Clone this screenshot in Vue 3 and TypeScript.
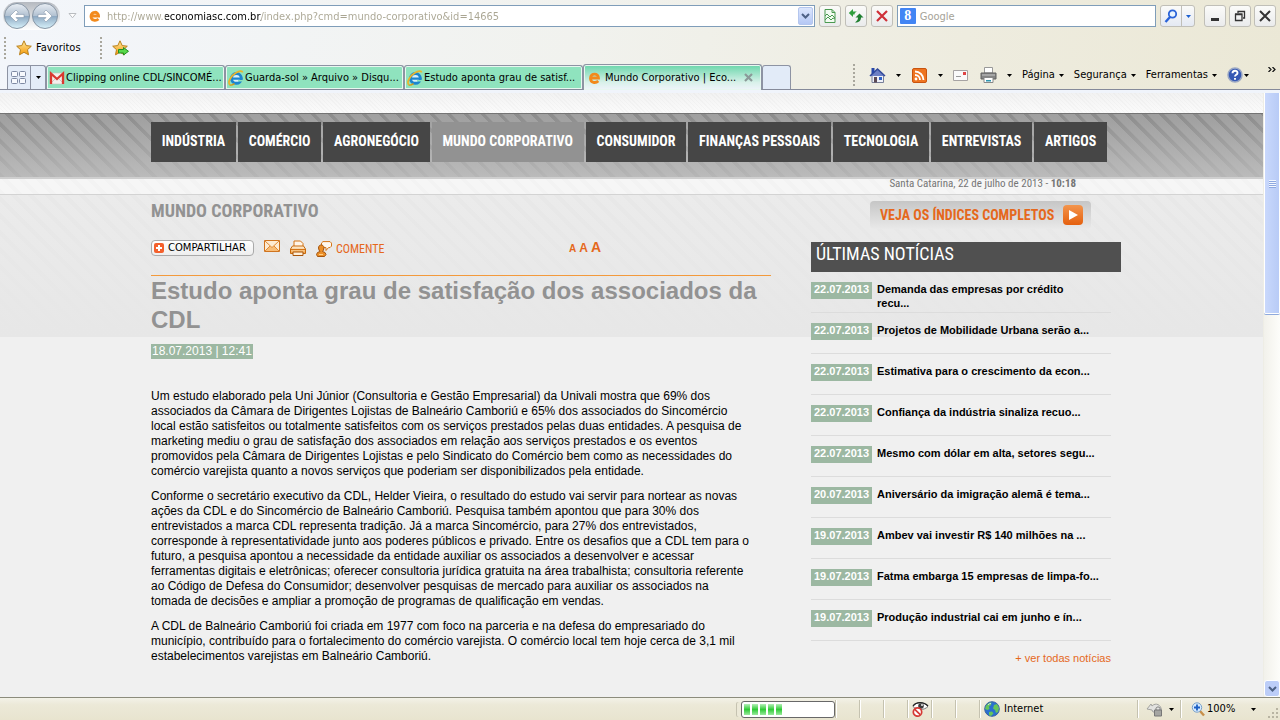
<script setup lang="ts">
interface Tab { title: string; icon: 'mail' | 'ie' }
interface News { date: string; title: string }

const tabs: Tab[] = [
  { title: 'Clipping online CDL/SINCOMÉ...', icon: 'mail' },
  { title: 'Guarda-sol » Arquivo » Disqu...', icon: 'ie' },
  { title: 'Estudo aponta grau de satisf...', icon: 'ie' },
]
const menus = ['Página', 'Segurança', 'Ferramentas']
const sections = ['INDÚSTRIA', 'COMÉRCIO', 'AGRONEGÓCIO', 'MUNDO CORPORATIVO', 'CONSUMIDOR', 'FINANÇAS PESSOAIS', 'TECNOLOGIA', 'ENTREVISTAS', 'ARTIGOS']
const paragraphs: string[][] = [
  [
    'Um estudo elaborado pela Uni Júnior (Consultoria e Gestão Empresarial) da Univali mostra que 69% dos',
    'associados da Câmara de Dirigentes Lojistas de Balneário Camboriú e 65% dos associados do Sincomércio',
    'local estão satisfeitos ou totalmente satisfeitos com os serviços prestados pelas duas entidades. A pesquisa de',
    'marketing mediu o grau de satisfação dos associados em relação aos serviços prestados e os eventos',
    'promovidos pela Câmara de Dirigentes Lojistas e pelo Sindicato do Comércio bem como as necessidades do',
    'comércio varejista quanto a novos serviços que poderiam ser disponibilizados pela entidade.',
  ],
  [
    'Conforme o secretário executivo da CDL, Helder Vieira, o resultado do estudo vai servir para nortear as novas',
    'ações da CDL e do Sincomércio de Balneário Camboriú. Pesquisa também apontou que para 30% dos',
    'entrevistados a marca CDL representa tradição. Já a marca Sincomércio, para 27% dos entrevistados,',
    'corresponde à representatividade junto aos poderes públicos e privado. Entre os desafios que a CDL tem para o',
    'futuro, a pesquisa apontou a necessidade da entidade auxiliar os associados a desenvolver e acessar',
    'ferramentas digitais e eletrônicas; oferecer consultoria jurídica gratuita na área trabalhista; consultoria referente',
    'ao Código de Defesa do Consumidor; desenvolver pesquisas de mercado para auxiliar os associados na',
    'tomada de decisões e ampliar a promoção de programas de qualificação em vendas.',
  ],
  [
    'A CDL de Balneário Camboriú foi criada em 1977 com foco na parceria e na defesa do empresariado do',
    'município, contribuído para o fortalecimento do comércio varejista. O comércio local tem hoje cerca de 3,1 mil',
    'estabelecimentos varejistas em Balneário Camboriú.',
  ],
]
const news: News[] = [
  { date: '22.07.2013', title: 'Demanda das empresas por crédito\nrecu...' },
  { date: '22.07.2013', title: 'Projetos de Mobilidade Urbana serão a...' },
  { date: '22.07.2013', title: 'Estimativa para o crescimento da econ...' },
  { date: '22.07.2013', title: 'Confiança da indústria sinaliza recuo...' },
  { date: '22.07.2013', title: 'Mesmo com dólar em alta, setores segu...' },
  { date: '20.07.2013', title: 'Aniversário da imigração alemã é tema...' },
  { date: '19.07.2013', title: 'Ambev vai investir R$ 140 milhões na ...' },
  { date: '19.07.2013', title: 'Fatma embarga 15 empresas de limpa-fo...' },
  { date: '19.07.2013', title: 'Produção industrial cai em junho e ín...' },
]
</script>

<template>
  <div class="browser">
    <svg class="defs" aria-hidden="true">
      <defs>
        <linearGradient id="orb" x1="0" y1="0" x2="0" y2="1">
          <stop offset="0" stop-color="#e9eef4" /><stop offset=".48" stop-color="#b3c2d2" />
          <stop offset=".52" stop-color="#8ea9c2" /><stop offset="1" stop-color="#d8f2fb" />
        </linearGradient>
        <linearGradient id="gold" x1="0" y1="0" x2="0" y2="1">
          <stop offset="0" stop-color="#ffe9a0" /><stop offset="1" stop-color="#f59a08" />
        </linearGradient>
        <linearGradient id="amber" x1="0" y1="0" x2="0" y2="1">
          <stop offset="0" stop-color="#fdf3e2" /><stop offset="1" stop-color="#f2a03c" />
        </linearGradient>
        <symbol id="ie" viewBox="0 0 16 16">
          <circle cx="8.4" cy="8.4" r="4.9" fill="#d9f1fb" stroke="#1d86cf" stroke-width="2.9" />
          <path d="M4 8.6h10.4" stroke="#1d86cf" stroke-width="2.2" />
          <path d="M10 9.9h5.5v1.5H10z" fill="#8de3bd" />
          <path d="M1.8 14.8C-.8 12 3.300 5.500 8 2.800c3.300-2 6.400-2.300 6.600-.3" fill="none" stroke="#eab52c" stroke-width="1.7" />
          <path d="M1.800 14.800c1.300.8 3.200-.2 4.700-1.200" fill="none" stroke="#d99b18" stroke-width="1.400" />
        </symbol>
        <symbol id="caret" viewBox="0 0 5 3"><path d="M0 0h5L2.500 3z" fill="currentColor" /></symbol>
        <symbol id="chevron" viewBox="0 0 9 6"><path d="M1 1l3.500 3.500L8 1" fill="none" stroke="#4d6185" stroke-width="2" /></symbol>
        <symbol id="star" viewBox="0 0 16 16">
          <path d="M8 .8l2.200 4.800 5.100.6-3.800 3.500 1 5.100L8 12.300l-4.500 2.500 1-5.100L.7 6.200l5.100-.6z" fill="url(#gold)" stroke="#b8801c" />
        </symbol>
      </defs>
    </svg>

    <header class="chrome">
      <div class="address-row">
        <div class="history">
          <button class="plain" aria-label="Voltar">
            <svg width="28" height="28" viewBox="0 0 28 28"><circle cx="14" cy="14" r="12.500" fill="url(#orb)" stroke="#8896a5" /><path d="M7 14l6-6 2.200 2.200-2.200 2.200h8v3.200h-8l2.200 2.200L13 20z" fill="#fff" stroke="#8496aa" stroke-width=".6" /></svg>
          </button>
          <button class="plain" aria-label="Avançar">
            <svg width="28" height="28" viewBox="0 0 28 28"><circle cx="14" cy="14" r="12.500" fill="url(#orb)" stroke="#8896a5" /><path d="M21 14l-6-6-2.200 2.200 2.200 2.200H7v3.200h8l-2.200 2.200L15 20z" fill="#fff" stroke="#8496aa" stroke-width=".6" /></svg>
          </button>
        </div>
        <button class="plain recent" aria-label="Páginas recentes"><svg width="9" height="6" viewBox="0 0 9 6"><path d="M1 .5h7L4.500 4.800z" fill="#fff" stroke="#b9bcc0" /></svg></button>
        <div class="field address">
          <svg width="16" height="16" viewBox="0 0 16 16"><path d="M4 8h7.600c0-5-7.600-5-7.600.2 0 4.800 5 5 7.500 2.800" fill="none" stroke="#f28a1c" stroke-width="2.800" /></svg>
          <input class="url" aria-label="Endereço" value="http://www.economiasc.com.br/index.php?cmd=mundo-corporativo&amp;id=14665">
          <button class="drop" aria-label="Lista de endereços"><svg width="9" height="6"><use href="#chevron" /></svg></button>
        </div>
        <div class="tools">
          <button class="tool" aria-label="Modo de compatibilidade"><svg width="16" height="16" viewBox="0 0 16 16"><path d="M3 1.500h7l3 3v10H3zM10 1.500v3h3M3 8l2-2 3 3 2-2 3 3M3 12l3-3 3 3 2-2 2 1" fill="#f3fbf2" stroke="#4a9a50" /></svg></button>
          <button class="tool" aria-label="Atualizar"><svg width="16" height="16" viewBox="0 0 16 16"><path d="M5 1L.8 5 5 9V6.500h1.500c0-1.500 1-2.500 2.500-3H5z" fill="#2f9e3c" /><path d="M11.500 5.500L7.500 9.500H10c0 2-1 3.500-3 5 4 0 6-2 6-5h2.500z" fill="#1f7f30" /></svg></button>
          <button class="tool" aria-label="Parar"><svg width="16" height="16" viewBox="0 0 16 16"><path d="M3 3l10 10M13 3L3 13" stroke="#cf3038" stroke-width="2.200" /></svg></button>
        </div>
        <div class="field search">
          <span class="google">8</span>
          <input aria-label="Pesquisar" placeholder="Google">
        </div>
        <div class="search-go">
          <button aria-label="Pesquisar"><svg width="14" height="14" viewBox="0 0 14 14"><circle cx="8.500" cy="5" r="3.700" fill="#e9f4ff" stroke="#2a63d8" stroke-width="1.800" /><path d="M6 8l-4.500 5" stroke="#2a63d8" stroke-width="2.400" /></svg></button>
          <button class="go-more" aria-label="Provedores"><svg width="5" height="3"><use href="#caret" /></svg></button>
        </div>
        <div class="window-controls">
          <button class="tool" aria-label="Minimizar"><svg width="12" height="12" viewBox="0 0 12 12"><path d="M2 8h8v3H2z" fill="#333" /></svg></button>
          <button class="tool" aria-label="Restaurar"><svg width="12" height="12" viewBox="0 0 12 12"><path d="M4 3V1.500h6.500V8H9M1.500 4.500H8v6H1.500zM1 4h7.500M4 1.500h7" fill="none" stroke="#333" stroke-width="1.300" /></svg></button>
          <button class="tool" aria-label="Fechar"><svg width="12" height="12" viewBox="0 0 12 12"><path d="M1 1l10 10M11 1L1 11" stroke="#333" stroke-width="2" /></svg></button>
        </div>
      </div>

      <div class="favorites-row">
        <span class="grip"></span>
        <button class="plain favorites"><svg width="16" height="16"><use href="#star" /></svg>Favoritos</button>
        <span class="grip"></span>
        <button class="plain add-fav" aria-label="Adicionar à barra de favoritos"><svg width="17" height="16" viewBox="0 0 17 16"><use href="#star" width="16" height="16" /><path d="M6.500 9.500h5v-2l5 3.800-5 3.700v-2h-5z" fill="#57d84a" stroke="#238f22" /></svg></button>
      </div>

      <div class="tab-row">
        <div class="tabs">
          <button class="quick" aria-label="Guias rápidas"><svg width="16" height="14" viewBox="0 0 16 14"><g fill="#f7f9fd" stroke="#7f8aa3"><rect x=".5" y=".5" width="6" height="5" rx="1" /><rect x="8.500" y=".5" width="6" height="5" rx="1" /><rect x=".5" y="7.500" width="6" height="5" rx="1" /><rect x="8.500" y="7.500" width="6" height="5" rx="1" /></g></svg></button>
          <button class="quick quick-more" aria-label="Lista de guias"><svg width="5" height="3"><use href="#caret" /></svg></button>
          <button v-for="tab in tabs" :key="tab.title" class="tab">
            <svg v-if="tab.icon === 'mail'" width="16" height="16" viewBox="0 0 16 16"><path d="M1 3h14v11H1z" fill="#f4efec" stroke="#c9c0ba" stroke-width=".6" /><path d="M1 14l5-5M15 14l-5-5" stroke="#cfc6c2" /><path d="M2 14V3.500l6 5.500 6-5.500V14" fill="none" stroke="#d9392f" stroke-width="2.300" /></svg>
            <svg v-else width="16" height="16"><use href="#ie" /></svg>
            <span>{{ tab.title }}</span>
          </button>
          <button class="tab current">
            <svg width="16" height="16" viewBox="0 0 16 16"><path d="M3 8h8.500c0-5.300-8-5.300-8 .2 0 5 5.200 5.200 7.800 2.800" fill="none" stroke="#f28a1c" stroke-width="2.800" /></svg>
            <span class="current-title">Mundo Corporativo | Eco...</span>
            <svg class="close" width="9" height="9" viewBox="0 0 9 9"><path d="M1 1l7 7M8 1L1 8" stroke="#8b9a99" stroke-width="2.200" /></svg>
          </button>
          <button class="new-tab" aria-label="Nova guia"></button>
        </div>
        <div class="commands">
          <span class="grip"></span>
          <button class="plain cmd" aria-label="Página inicial"><svg width="17" height="17" viewBox="0 0 17 17"><path d="M3 8h11.500v7.500H3z" fill="#eef0f8" stroke="#777f99" /><path d="M1 9l7.500-7 7.500 7" fill="#6c7fc4" stroke="#334a9a" stroke-width="1.600" /><path d="M2.500 1h3v4l-3 2z" fill="#2747a8" /><path d="M5 10h3v5.500H5z" fill="#5c4a55" /><path d="M10 10h3v3h-3z" fill="#2e62c8" /></svg></button>
          <button class="plain more" aria-label="Opções de página inicial"><svg width="5" height="3"><use href="#caret" /></svg></button>
          <button class="plain cmd" aria-label="Feeds"><svg width="15" height="15" viewBox="0 0 15 15"><rect x=".5" y=".5" width="14" height="14" rx="1.500" fill="#ee7420" stroke="#c9540f" /><path d="M3 7a5 5 0 015 5M3 3.500a8.500 8.500 0 018.500 8.500" fill="none" stroke="#fff" stroke-width="1.800" /><circle cx="4" cy="11" r="1.400" fill="#fff" /></svg></button>
          <button class="plain more" aria-label="Opções de feeds"><svg width="5" height="3"><use href="#caret" /></svg></button>
          <button class="plain mail" aria-label="Ler email"><svg width="15" height="11" viewBox="0 0 15 11"><path d="M.5 .5h14v10H.5z" fill="#fafafa" stroke="#a6a3a3" /><path d="M10 2h3v3h-3z" fill="#df4545" /><path d="M3 6.500h5" stroke="#999" /></svg></button>
          <button class="plain cmd" aria-label="Imprimir"><svg width="17" height="16" viewBox="0 0 17 16"><path d="M4.500.5h8V6h-8z" fill="#fff" stroke="#999" /><path d="M1 6h15v6H1z" fill="#858585" stroke="#606060" /><path d="M2 8h13" stroke="#c7c7c7" /><path d="M4 10.500h9v5H4z" fill="#fff" stroke="#888" /><path d="M6 13h5v1.500H6z" fill="#2d95ae" /></svg></button>
          <button class="plain more" aria-label="Opções de impressão"><svg width="5" height="3"><use href="#caret" /></svg></button>
          <button v-for="menu in menus" :key="menu" class="plain menu">{{ menu }}<svg width="5" height="3"><use href="#caret" /></svg></button>
          <button class="plain help" aria-label="Ajuda"><svg width="16" height="16" viewBox="0 0 16 16"><circle cx="8" cy="8" r="7" fill="#3659b4" stroke="#9aa7c4" stroke-width="1.500" /><path d="M5.500 6.200c0-3.300 5-3.200 5-.3 0 1.900-2.500 1.900-2.500 3.600M8 11v1.800" fill="none" stroke="#fff" stroke-width="1.900" /></svg><svg width="5" height="3"><use href="#caret" /></svg></button>
          <button class="plain overflow" aria-label="Mais comandos"><svg width="8" height="5" viewBox="0 0 8 5"><path d="M.5 0L3 2.500.5 5M4.500 0L7 2.500 4.500 5" fill="none" stroke="#111" stroke-width="1.200" /></svg></button>
        </div>
      </div>
    </header>

    <div class="viewport">
      <main class="page">
        <div class="texture"></div>
        <nav class="band">
          <div class="wrap sections">
            <a v-for="s in sections" :key="s" href="#" :class="{ active: s === 'MUNDO CORPORATIVO' }">{{ s }}</a>
          </div>
        </nav>
        <div class="strip"><div class="wrap today">Santa Catarina, 22 de julho de 2013 - <b>10:18</b></div></div>
        <div class="content">
          <div class="wrap columns">
            <article>
              <h2>MUNDO CORPORATIVO</h2>
              <div class="actions">
                <button class="share"><svg width="10" height="10" viewBox="0 0 10 10"><rect width="10" height="10" rx="2" fill="#f4602c" /><path d="M5 2v6M2 5h6" stroke="#fff" stroke-width="2" /></svg>COMPARTILHAR</button>
                <a href="#" class="send" aria-label="Enviar"><svg width="16" height="12" viewBox="0 0 16 12"><path d="M.5.5h15v11H.5z" fill="#fdebd3" stroke="#cf7420" /><path d="M1 11l5-5 2 1.500L10 6l5 5z" fill="#f8bd78" /><path d="M1 1l7 6.500L15 1M1 11l5-5M15 11l-5-5" fill="none" stroke="#e08a34" /></svg></a>
                <a href="#" aria-label="Imprimir"><svg width="16" height="16" viewBox="0 0 16 16"><path d="M4 7V1h6.500L13 3.500V7" fill="#fff5e8" stroke="#d47416" /><path d="M2.500 6h11l2 3v4.500H.5V9z" fill="url(#amber)" stroke="#c8690b" /><path d="M1 9.500h14" stroke="#d47416" /><path d="M3 12h10v3.500H3z" fill="#fff0d9" stroke="#a9550b" /></svg></a>
                <a href="#" class="comment"><svg width="16" height="16" viewBox="0 0 16 16"><path d="M7 .6h7l1.500 1.500v3L14 6.600h-1.500L10 9.500V6.600H7L5.500 5V2z" fill="#fff8ee" stroke="#d47416" /><path d="M2.500 7c0-4 5-4 5.500-.5L7.500 9l-1 1.500 2.500 1 1 2-1.500 2H1.500l-1-2 1-2 2.500-1L3 9z" fill="#ec8f28" stroke="#a3540f" /><path d="M3 13.500h4" stroke="#ffd089" /></svg>COMENTE</a>
                <span class="sizes"><a href="#" class="s">A</a><a href="#" class="m">A</a><a href="#" class="l">A</a></span>
              </div>
              <h1>Estudo aponta grau de satisfação dos associados da CDL</h1>
              <time>18.07.2013 | 12:41</time>
              <div class="body">
                <p v-for="(p, i) in paragraphs" :key="i"><template v-for="(line, j) in p" :key="j">{{ line }}<br v-if="j < p.length - 1"></template></p>
              </div>
            </article>
            <aside>
              <a href="#" class="indices">VEJA OS ÍNDICES COMPLETOS<svg width="20" height="20" viewBox="0 0 20 20"><defs><linearGradient id="play" x1="0" y1="0" x2="0" y2="1"><stop offset="0" stop-color="#f3954d" /><stop offset="1" stop-color="#e5600e" /></linearGradient></defs><rect width="20" height="20" rx="4" fill="url(#play)" /><path d="M6 5l9 5-9 5z" fill="#fff" /></svg></a>
              <h3>ÚLTIMAS NOTÍCIAS</h3>
              <ul>
                <li v-for="n in news" :key="n.title"><span class="stamp">{{ n.date }}</span><a href="#">{{ n.title }}</a></li>
              </ul>
              <a href="#" class="all">+ ver todas notícias</a>
            </aside>
          </div>
        </div>
      </main>
      <div class="scrollbar">
        <div class="thumb"><i></i></div>
        <button class="down" aria-label="Rolar para baixo"><svg width="9" height="6"><use href="#chevron" /></svg></button>
      </div>
    </div>

    <footer class="status">
      <div class="progress"><span v-for="n in 5" :key="n"></span></div>
      <span class="cell"></span><span class="cell"></span><span class="cell"></span>
      <span class="cell"><svg width="17" height="16" viewBox="0 0 17 16"><path d="M1 5.500C4 .5 12 .5 16 5.500c-4 4-11 4-15 0z" fill="#fff" stroke="#777" /><path d="M1 5C4 .5 12 .5 16 5" fill="none" stroke="#222" stroke-width="1.300" /><circle cx="9" cy="5" r="2.800" fill="#3c3c3c" /><circle cx="10" cy="4" r=".9" fill="#fff" /><circle cx="5.500" cy="11" r="4.200" fill="#fff" stroke="#d53a35" stroke-width="1.700" /><path d="M2.800 8.300l5.400 5.400" stroke="#d53a35" stroke-width="1.700" /></svg></span>
      <span class="cell"></span><span class="cell"></span>
      <span class="cell zone"><svg width="16" height="16" viewBox="0 0 16 16"><circle cx="8" cy="8" r="7.300" fill="#2a70cf" stroke="#3b62a0" /><path d="M2 5c1-2 4-4 5.500-3.500L7 4 5 5.500 5.500 8l-2 1L1 8zM10 4l3-1 2 4-1 4-2 1-1-3-2-1.500zM5 11l3-.5 1.500 2L7 15l-2-1z" fill="#66c65a" /><path d="M4 4c1-1 2-1.500 3-1.500" stroke="#dff2ff" /></svg>Internet</span>
      <span class="cell protect"><svg width="18" height="16" viewBox="0 0 18 16"><path d="M1 8L5 3l1 2c4-4 9-1 9.500 4L14 11H7L6 9z" fill="#e2e2e0" stroke="#a3a3a0" /><path d="M8.500 9h7v6h-7z" fill="#a5a5a2" stroke="#777" /><path d="M10 9V7.500c0-2 4-2 4 0V9" fill="none" stroke="#777" /></svg><svg width="5" height="3"><use href="#caret" /></svg></span>
      <button class="cell zoom"><svg width="14" height="15" viewBox="0 0 14 15"><path d="M9 9l4 4.500" stroke="#c78f4a" stroke-width="2.400" /><circle cx="6" cy="5.500" r="4.700" fill="#d6ebff" stroke="#79a0c8" /><path d="M6 2.500v6M3 5.500h6" stroke="#1c5fc4" stroke-width="1.800" /></svg>100%<svg class="zoom-caret" width="5" height="3"><use href="#caret" /></svg></button>
      <svg class="resize" width="12" height="12" viewBox="0 0 12 12"><path d="M8 0h2v2H8zM4 4h2v2H4zM8 4h2v2H8zM0 8h2v2H0zM4 8h2v2H4zM8 8h2v2H8z" fill="#b8b4a2" /></svg>
    </footer>
  </div>
</template>

<style>
body { margin: 0; overflow: hidden; }
</style>

<style scoped>
* { box-sizing: border-box; }
.browser { height: 100vh; display: flex; flex-direction: column; background: #f0f0f0; color: #000; font: 11px/14px "DejaVu Sans Condensed", "DejaVu Sans", sans-serif; }
.defs { position: absolute; width: 0; height: 0; }
svg { display: block; flex: none; }
button, input { font: inherit; color: inherit; margin: 0; padding: 0; }
a { text-decoration: none; color: inherit; }
.plain { border: 0; background: none; display: flex; align-items: center; white-space: nowrap; }

.chrome { flex: none; background: linear-gradient(100deg, #f3f6fb 0%, #f1f2ee 45%, #eeecdf 75%, #ebe8d6 100%); }
.address-row { display: flex; align-items: center; height: 32px; padding-right: 4px; }
.history { display: flex; width: 57px; height: 28px; margin-left: 3px; border-radius: 14px; background: linear-gradient(#b5b9c0, #fff); }
.recent { width: 24px; justify-content: center; height: 20px; }
.field { display: flex; align-items: center; height: 22px; background: #fff; border: 1px solid #7f9db9; }
.field input { flex: 1; min-width: 0; border: 0; outline: 0; background-color: transparent; height: 18px; }
.address { flex: 731; min-width: 0; padding: 1px 1px 1px 2px; gap: 4px; }
.address .url { color: transparent; background-image: linear-gradient(90deg, #a9a592 58px, #000 58px, #000 154px, #a9a592 154px); -webkit-background-clip: text; background-clip: text; }
.drop { width: 15px; height: 18px; border: 1px solid #b4c6ee; border-radius: 2px; background: linear-gradient(#dce6fd, #b5c8f5); display: grid; place-items: center; }
.tools { display: flex; gap: 4px; margin: 0 4px; }
.tool { width: 22px; height: 22px; display: grid; place-items: center; border: 1px solid #c0bfb8; border-radius: 3px; background: linear-gradient(#fbfbf9, #eaebec); }
.search { flex: 255; min-width: 0; padding: 1px 2px; gap: 4px; }
.google { width: 16px; height: 16px; border-radius: 1px; background: #4285f4; color: #fff; font: bold 14px/16px "Liberation Serif", serif; text-align: center; }
.search input::placeholder { color: #a5a297; opacity: 1; }
.search-go { display: flex; margin-left: 4px; height: 22px; border: 1px solid #c0bfb8; border-radius: 3px; background: linear-gradient(#fbfbf9, #e4e9f3); }
.search-go button { border: 0; background: none; width: 20px; display: grid; place-items: center; }
.search-go .go-more { width: 13px; border-left: 1px solid #c0bfb8; color: #1a5fd0; }
.window-controls { display: flex; gap: 3px; margin-left: 9px; }

.grip { width: 2px; height: 22px; background: repeating-linear-gradient(#a9a79d 0 2px, transparent 2px 4px); }
.favorites-row { display: flex; align-items: center; height: 31px; padding-left: 4px; }
.favorites { gap: 4px; margin: 0 19px 0 10px; }
.add-fav { margin-left: 10px; }

.tab-row { display: flex; align-items: flex-end; justify-content: space-between; height: 27px; border-bottom: 1px solid #858a9a; }
.tabs { display: flex; align-items: flex-end; padding-left: 7px; }
.quick { width: 24px; height: 24px; display: grid; place-items: center; border: 1px solid #8d93a3; border-bottom: 0; border-radius: 3px 0 0 0; background: #e4ecf8; }
.quick-more { width: 15px; border-left: 0; border-radius: 0 3px 0 0; }
.tab { display: flex; align-items: center; gap: 1px; width: 179px; height: 24px; padding: 0 2px; border: 1px solid #8d93a3; border-bottom: 0; border-radius: 3px 3px 0 0; background: #8fe3be; box-shadow: inset 0 0 0 1px #e8f7f0; white-space: nowrap; overflow: hidden; }
.current { gap: 2px; padding-left: 3px; height: 26px; margin-bottom: -1px; background: linear-gradient(#69d6aa, #d9f1ea 70%, #f0f4fb); }
.current-title { flex: 1; text-align: left; }
.close { margin-right: 6px; }
.new-tab { width: 29px; height: 24px; border: 1px solid #8d93a3; border-bottom: 0; border-radius: 3px 3px 0 0; background: #e2ebf8; }
.commands { display: flex; align-items: center; height: 28px; }
.cmd { width: 17px; justify-content: center; }
.commands .grip { margin-right: 14px; }
.more { width: 25px; justify-content: center; }
.mail { margin-right: 12px; }
.menu { gap: 4px; margin-right: 10px; }
.help { gap: 1px; margin-right: 19px; }
.overflow { align-self: flex-start; margin: 6px 4px 0 0; }

.viewport { flex: 1; min-height: 0; display: flex; border-top: 3px solid #f0f4fb; }
.page { flex: 1; min-width: 0; font: 12px/15px "Liberation Sans", Arial, sans-serif; background: #f0f0f0; overflow: hidden; }
.wrap { max-width: 961px; margin: 0 auto; }
.texture { height: 20px; background: repeating-linear-gradient(45deg, rgb(0 0 0 / 2%) 0 1px, transparent 1px 3px), linear-gradient(#f2f2f2, #fbfbfb); }
.band { height: 66px; padding-top: 8px; border-top: 1px solid #747474; border-bottom: 2px solid #cfcfcf; background: linear-gradient(rgb(196 196 196 / 0%), rgb(196 196 196 / 75%)), repeating-linear-gradient(45deg, #8c8c8c 0 3px, #9f9f9f 4px 12px); }
.sections { display: flex; gap: 2px; padding-right: 5px; }
.sections a { flex: 1 1 auto; height: 40px; padding: 0 4px; background: #464646; color: #fff; font: bold 14px/39px "Liberation Sans Narrow", "Arial Narrow", "Roboto Condensed", sans-serif; text-align: center; white-space: nowrap; }
.sections .active { background: #929292; }
.strip { height: 16px; background: repeating-linear-gradient(45deg, #f3f3f3 0 4px, #f6f6f6 4px 12px); border-bottom: 1px solid #d3d3d3; }
.today { padding-right: 36px; text-align: right; font: 11px/10px "Liberation Sans Narrow", "Roboto Condensed", "Liberation Sans", sans-serif; color: #757575; }
.content { background: linear-gradient(rgb(235 235 235 / 25%), #e7e7e7) 0 0 / 100% 142px no-repeat, repeating-linear-gradient(45deg, #e7e7e7 0 4px, #ebebeb 4px 12px) 0 0 / 100% 142px no-repeat; }
.columns { display: flex; gap: 40px; }
article { flex: 0 1 620px; min-width: 0; }
h1, h2, h3, p, ul { margin: 0; padding: 0; font-weight: normal; }
h2 { padding-top: 6px; font: bold 18px/20px "Liberation Sans Narrow", "Roboto Condensed", "Liberation Sans", sans-serif; color: #929292; }
.actions { display: flex; align-items: flex-start; gap: 10px; height: 55px; padding-top: 19px; border-bottom: 1px solid #f39a3c; font-family: "Liberation Sans Narrow", "Roboto Condensed", "Liberation Sans", sans-serif; color: #e5681c; }
.share { display: flex; align-items: center; gap: 4px; width: 103px; height: 16px; padding-left: 2px; border: 1px solid #aaa; border-radius: 4px; background: linear-gradient(#fff, #eee); color: #000; font: 10px/14px "DejaVu Sans", sans-serif; white-space: nowrap; }
.comment { display: flex; align-items: center; gap: 4px; line-height: 20px; height: 18px; }
.sizes { display: flex; align-items: baseline; gap: 3px; margin-left: auto; margin-right: 170px; font-family: "Liberation Sans", sans-serif; font-weight: bold; }
.s { font-size: 10px; }
.m { font-size: 12px; }
.l { font-size: 14px; }
h1 { font: bold 24px/29px "Liberation Sans", Arial, sans-serif; color: #929292; }
time { display: inline-block; margin-top: 10px; padding: 0 1px; background: #9cb8a2; color: #fff; }
.body { margin-top: 30px; white-space: nowrap; }
.body p + p { margin-top: 10px; }
aside { flex: none; width: 300px; }
.indices { display: flex; align-items: center; justify-content: space-between; width: 221px; height: 28px; margin: 6px 0 0 59px; padding: 0 8px 0 10px; border-radius: 4px; background: linear-gradient(#c6c6c6, #e9e9e9); color: #e5681c; font: bold 14px/28px "Liberation Sans Narrow", "Roboto Condensed", "Liberation Sans", sans-serif; white-space: nowrap; }
h3 { height: 30px; margin: 13px -10px 0 0; padding-left: 5px; background: #505050; color: #fff; font: 18px/24px "Liberation Sans Narrow", "Roboto Condensed", "Liberation Sans", sans-serif; }
ul { list-style: none; }
li { display: flex; align-items: flex-start; gap: 5px; height: 41px; padding-top: 10px; border-bottom: 1px solid #dcdcdc; font: bold 11px/14px "Liberation Sans", Arial, sans-serif; white-space: pre; }
.stamp { flex: none; width: 61px; height: 17px; background: #9cb8a2; color: #fff; text-align: center; }
.all { display: block; margin-top: 10px; font-size: 11px; text-align: right; color: #e5681c; }

.scrollbar { width: 17px; display: flex; flex-direction: column; justify-content: space-between; border-left: 1px solid #eeede5; background: linear-gradient(90deg, #f2f1eb, #fdfdfa); }
.thumb { height: 221px; display: grid; place-items: center; padding-bottom: 38px; border: 1px solid #fff; border-top: 0; border-radius: 0 0 2px 2px; background: linear-gradient(90deg, #c9d8fc, #b8cbf6); box-shadow: 0 1px #8fa9dc; }
.thumb i { width: 7px; height: 8px; background: repeating-linear-gradient(#f3f7ff 0 1px, #8ea8e0 1px 2px); }
.down { height: 17px; border: 1px solid #fff; border-radius: 3px; background: #bccdf8; display: grid; place-items: center; }

.status { flex: none; display: flex; align-items: center; justify-content: flex-end; height: 23px; border-top: 1px solid #8c8c7c; background: linear-gradient(#f3f2e8, #ece9d8 30%, #e8e4cf); }
.progress { display: flex; gap: 2px; width: 94px; height: 17px; padding: 2px; border: 1px solid #686868; border-radius: 3px; background: #fff; box-shadow: -5px 0 0 -1px #ece9d8, -6px 0 0 -1px #c5c2b0; }
.progress span { width: 6px; background: linear-gradient(#b5f0b8, #2fcb36 50%, #9be99e); }
.cell { display: flex; align-items: center; width: 24px; height: 18px; padding: 0 0 0 4px; border: 0; border-left: 1px solid #c5c2b0; background: none; box-shadow: inset 1px 0 #fff; white-space: nowrap; }
.zone { width: 158px; padding-left: 4px; gap: 4px; }
.protect { width: 43px; padding-left: 8px; gap: 5px; }
.zoom { width: 84px; padding-left: 10px; gap: 2px; }
.zoom-caret { margin-left: auto; margin-right: 8px; }
.resize { align-self: flex-end; margin-left: 4px; }
</style>
